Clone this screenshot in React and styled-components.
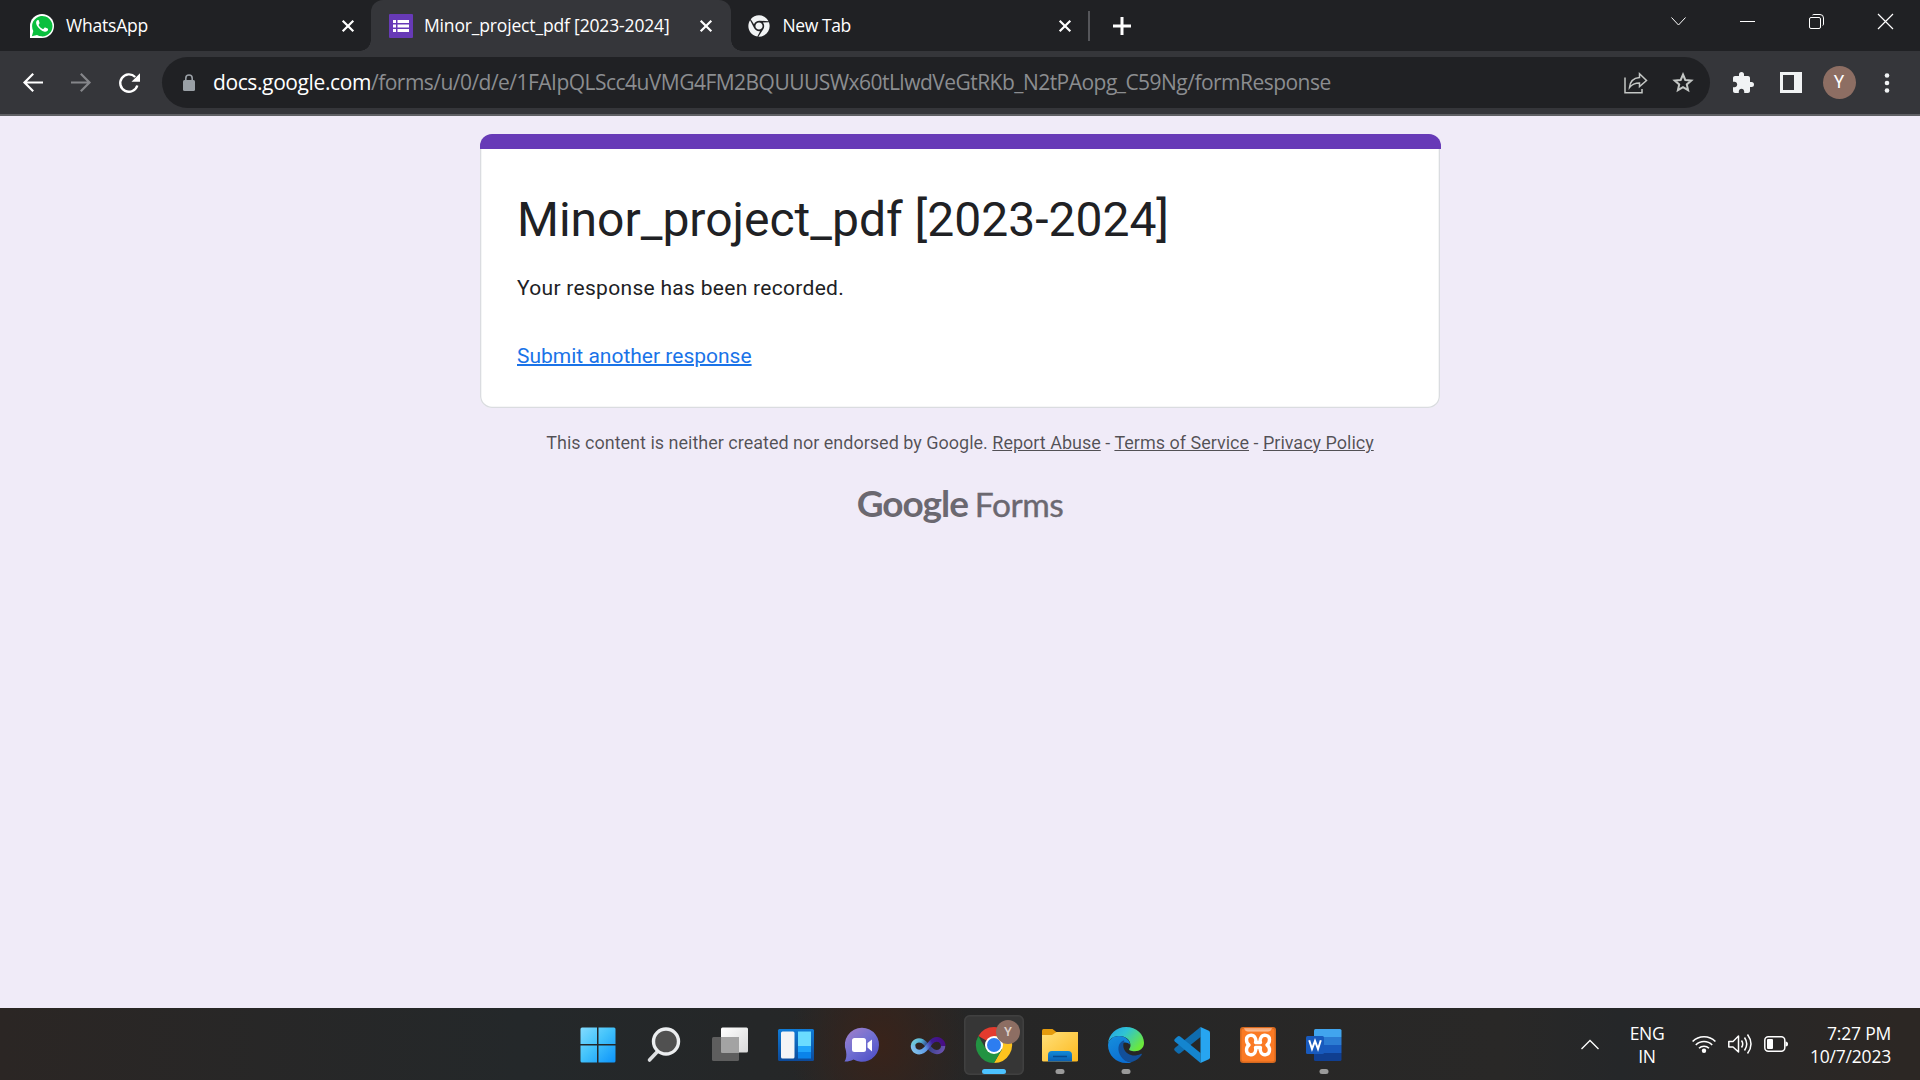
import React from "react";
import styled, { createGlobalStyle } from "styled-components";
import { FaChrome } from "react-icons/fa";

const GlobalStyle = createGlobalStyle`
  * { box-sizing: border-box; }
  body { margin: 0; background: #f0ebf8; overflow: hidden; }
`;

const ui = `"Open Sans", "Noto Sans", sans-serif`;

const Screen = styled.div`
  width: 1920px;
  height: 1080px;
  display: flex;
  flex-direction: column;
  font-family: ${ui};
`;

const Icon = styled.svg`
  display: block;
  flex: none;
  overflow: visible;
`;

/* ---------- Tab strip ---------- */

const TabStrip = styled.div`
  height: 51px;
  flex: none;
  display: flex;
  background: #202124;
`;

const Tab = styled.div`
  position: relative;
  width: ${(p) => p.$width}px;
  height: 51px;
  padding: 0 ${(p) => p.$right}px 0 ${(p) => p.$left}px;
  display: flex;
  align-items: center;
  color: #fff;
  background: ${(p) => (p.$active ? "#35363a" : "transparent")};
  border-radius: 12px 12px 0 0;
`;

const Flare = styled.span`
  position: absolute;
  bottom: 0;
  ${(p) => (p.$side === "left" ? "left: -11px;" : "right: -11px;")}
  width: 11px;
  height: 11px;
  background: radial-gradient(
    circle at ${(p) => (p.$side === "left" ? "0 0" : "100% 0")},
    transparent 10.5px,
    #35363a 11px
  );
`;

const TabTitle = styled.span`
  flex: 1;
  margin-left: ${(p) => p.$gap}px;
  padding-bottom: 1px;
  font-size: 17.5px;
  line-height: 24px;
  letter-spacing: ${(p) => p.$spacing}px;
  white-space: nowrap;
`;

const StripDivider = styled.div`
  width: 2px;
  height: 30px;
  margin-top: 11px;
  background: #55565a;
`;

const NewTab = styled.div`
  width: 64px;
  display: flex;
  align-items: center;
  justify-content: center;
`;

const WindowControls = styled.div`
  margin-left: auto;
  height: 43px;
  display: flex;
`;

const WindowButton = styled.div`
  width: 69px;
  display: flex;
  align-items: center;
  justify-content: center;
`;

/* ---------- Toolbar ---------- */

const Toolbar = styled.div`
  height: 65px;
  flex: none;
  display: flex;
  align-items: center;
  background: #35363a;
  border-bottom: 2px solid #5f6064;
`;

const NavGroup = styled.div`
  width: 162px;
  padding-left: 9px;
  display: flex;
`;

const NavButton = styled.div`
  width: 48px;
  display: flex;
  align-items: center;
  justify-content: center;
`;

const AddressBar = styled.div`
  width: 1548px;
  height: 51px;
  padding: 0 16px 0 21px;
  border-radius: 26px;
  display: flex;
  align-items: center;
  background: #202124;
`;

const Url = styled.div`
  flex: 1;
  margin-left: 18px;
  padding-bottom: 1px;
  font-size: 21px;
  line-height: 30px;
  white-space: nowrap;
  color: #8b8d90;
`;

const Host = styled.span`
  color: #fff;
  letter-spacing: -0.39px;
`;

const Path = styled.span`
  letter-spacing: -0.53px;
`;

const BarActions = styled.div`
  display: flex;
  gap: 24px;
  align-items: center;
`;

const ToolbarActions = styled.div`
  flex: 1;
  padding-left: 9px;
  display: flex;
  align-items: center;
`;

const Avatar = styled.div`
  width: 33px;
  height: 33px;
  border-radius: 50%;
  display: flex;
  align-items: center;
  justify-content: center;
  background: #8d6e63;
  color: #fff;
  font: 17.5px/1 Roboto, sans-serif;
`;

/* ---------- Form page ---------- */

const Page = styled.main`
  flex: 1;
  padding-top: 18px;
  display: flex;
  flex-direction: column;
  align-items: center;
  background: #f0ebf8;
  font-family: Roboto, sans-serif;
`;

const Card = styled.section`
  width: 960px;
  height: 274px;
  display: flex;
  flex-direction: column;
  border-radius: 12px;
  background: #fff;
  box-shadow: inset 0 0 0 1.3px #dadce0;
`;

const CardBand = styled.div`
  width: 961px;
  height: 15px;
  flex: none;
  border-radius: 12px 12px 0 0;
  background: #673ab7;
`;

const CardBody = styled.div`
  padding: 38px 37px 0;
  display: flex;
  flex-direction: column;
  align-items: flex-start;
`;

const Title = styled.h1`
  margin: 0;
  font-size: 48px;
  font-weight: 400;
  line-height: 65px;
  color: #202124;
  white-space: nowrap;
`;

const Message = styled.p`
  margin: 21px 0 0;
  font-size: 21px;
  line-height: 30px;
  letter-spacing: 0.3px;
  color: #202124;
`;

const SubmitLink = styled.a`
  margin-top: 38px;
  font-size: 21px;
  line-height: 30px;
  color: #1a73e8;
  text-decoration: underline;
  text-decoration-thickness: 2px;
`;

const Disclaimer = styled.p`
  margin: 21px 0 0;
  font-size: 18px;
  line-height: 27px;
  color: rgba(0, 0, 0, 0.66);
  white-space: nowrap;
`;

const FooterLink = styled.a`
  color: inherit;
  text-decoration: underline;
`;

const Brand = styled.div`
  margin-top: 25px;
  display: flex;
  align-items: baseline;
  gap: 7px;
  font-family: Lato, sans-serif;
  line-height: 44px;
  color: #6b6870;
`;

const BrandName = styled.span`
  font-size: 37px;
  font-weight: 700;
  letter-spacing: -1.05px;
`;

const BrandProduct = styled.span`
  font-size: 33.5px;
  letter-spacing: -0.45px;
  -webkit-text-stroke: 0.4px #6b6870;
`;

/* ---------- Taskbar ---------- */

const Taskbar = styled.footer`
  height: 72px;
  flex: none;
  padding: 1px 0 0 565px;
  display: flex;
  align-items: center;
  background: radial-gradient(ellipse 90px 110px at 880px 36px, #39231a, rgba(57, 35, 26, 0) 100%),
    linear-gradient(90deg, #2b2624 0, #24282a 520px, #262626 1000px, #292827 1500px, #252729 1620px, #2c2724 1900px);
`;

const AppButton = styled.div`
  position: relative;
  width: 60px;
  height: 60px;
  margin: 0 3px;
  display: flex;
  align-items: center;
  justify-content: center;
  border-radius: 6px;
  background: ${(p) => (p.$active ? "#363636" : "transparent")};
  box-shadow: ${(p) => (p.$active ? "inset 0 0 0 1.5px #404040" : "none")};
`;

const Indicator = styled.span`
  position: absolute;
  left: 50%;
  bottom: 1px;
  width: ${(p) => (p.$active ? 24 : 9)}px;
  height: 5px;
  transform: translateX(-50%);
  border-radius: 3px;
  background: ${(p) => (p.$active ? "#4cc2ff" : "#9a9a9a")};
`;

const ProfileBadge = styled.span`
  position: absolute;
  top: 5px;
  left: 32px;
  width: 24px;
  height: 24px;
  border-radius: 50%;
  display: flex;
  align-items: center;
  justify-content: center;
  background: #8d6e63;
  color: #ddd0cb;
  font: 500 13px/1 Roboto, sans-serif;
`;

const Tray = styled.div`
  margin-left: auto;
  padding-right: 29px;
  display: flex;
  align-items: center;
  color: #fff;
  font-size: 17.5px;
  line-height: 23px;
`;

const Language = styled.div`
  width: 36px;
  margin: 0 27px 0 30px;
  display: flex;
  flex-direction: column;
  align-items: center;
  letter-spacing: -0.4px;
`;

const StatusIcons = styled.div`
  padding-bottom: 1px;
  display: flex;
  gap: 12px;
`;

const Clock = styled.div`
  width: 103px;
  text-align: right;
  letter-spacing: -0.2px;
  white-space: nowrap;
`;

/* ---------- Drawings ---------- */

const CloseX = () => (
  <Icon width="12" height="12" viewBox="0 0 12 12" stroke="#fff" strokeWidth="2.2">
    <path d="M.7.7 11.3 11.3M11.3.7.7 11.3" />
  </Icon>
);

const WhatsAppIcon = () => (
  <Icon width="24" height="24" viewBox="0 0 24 24">
    <path d="M0 24V12A12 12 0 1 1 12 24H0Z" fill="#fff" />
    <path d="M1.9 22.2 3.3 17A10.2 10.2 0 1 1 7 20.9Z" fill="#0abf3e" />
    <path
      d="M8.8 6.5c-.3-.6-.8-.6-1.2-.4-2 1.2-1.8 3.6-.6 5.6 1.8 3 4.5 5.3 7.7 6 1.7.3 3.3-.8 3.4-2.2 0-.5-.2-.7-.6-.9l-2.2-1c-.4-.2-.7-.1-1 .3l-.7.9c-.2.3-.5.3-.9.1-1.7-.7-3.1-2-4-3.7-.2-.3-.1-.6.1-.8l.6-.8c.2-.3.2-.5.1-.8Z"
      fill="#fff"
    />
  </Icon>
);

const FormsIcon = () => (
  <Icon width="24" height="24" viewBox="0 0 24 24">
    <rect width="24" height="24" rx="1" fill="#673ab7" />
    <path d="M4 6h3v3H4zM8.5 6H20v3H8.5zM4 10.5h3v3H4zM8.5 10.5H20v3H8.5zM4 15h3v3H4zM8.5 15H20v3H8.5z" fill="#fff" />
  </Icon>
);

const ArrowIcon = ({ color = "#fff", flip }) => (
  <Icon width="20" height="19" viewBox="0 0 20 19" fill="none" stroke={color} strokeWidth="2.2">
    <path d={flip ? "M0 9.5H18M9.8.8 18.5 9.5 9.8 18.2" : "M20 9.5H2M10.2.8 1.5 9.5 10.2 18.2"} />
  </Icon>
);

const ReloadIcon = () => (
  <Icon width="21" height="20" viewBox="0 0 21 20">
    <path d="M18.3 12.5A8.7 8.7 0 1 1 16.2 4" fill="none" stroke="#fff" strokeWidth="2.4" />
    <path d="M21 .3V8.8H12.5Z" fill="#fff" />
  </Icon>
);

const LockIcon = () => (
  <Icon width="12" height="17" viewBox="0 0 12 17">
    <rect y="6" width="12" height="11" rx="1.5" fill="#9aa0a6" />
    <path d="M2.8 7V4.2a3.2 3.2 0 0 1 6.4 0V7" fill="none" stroke="#9aa0a6" strokeWidth="1.6" />
  </Icon>
);

const ShareIcon = () => (
  <Icon width="24" height="22" viewBox="0 0 24 22" fill="none" stroke="#c4c7c5" strokeWidth="1.5">
    <path d="M1 5.5V20.7H18V17" />
    <path d="M5.500 15.500C6 9.500 9.500 6 15.500 5.500V1.800L22.500 8.500 15.500 14.500V11C11 11 8 12.300 5.500 15.500Z" />
  </Icon>
);

const StarIcon = () => (
  <Icon width="22" height="21" viewBox="0 0 22 21" fill="none" stroke="#c4c7c5" strokeWidth="2">
    <path d="M11 2.5 13.3 8 19.3 8.5 14.8 12.4 16.1 18.2 11 15.1 5.9 18.2 7.2 12.4 2.7 8.5 8.7 8Z" />
  </Icon>
);

const PuzzleIcon = () => (
  <Icon width="24" height="24" viewBox="0 0 24 24" fill="#f1f3f4">
    <path d="M20.5 11H19V7c0-1.100-.9-2-2-2h-4V3.500a2.500 2.500 0 0 0-5 0V5H4c-1.100 0-1.990.9-1.990 2v3.800H3.500c1.490 0 2.700 1.210 2.700 2.700s-1.210 2.700-2.700 2.700H2V20c0 1.100.9 2 2 2h3.800v-1.500c0-1.490 1.210-2.700 2.700-2.700 1.490 0 2.700 1.210 2.700 2.700V22H17c1.100 0 2-.9 2-2v-4h1.500a2.500 2.500 0 0 0 0-5z" />
  </Icon>
);

const SidePanelIcon = () => (
  <Icon width="22" height="21" viewBox="0 0 22 21">
    <path d="M0 0H22V21H0ZM3 3V18H14V3Z" fill="#f1f3f4" fillRule="evenodd" />
  </Icon>
);

const DotsIcon = () => (
  <Icon width="5" height="20" viewBox="0 0 5 20" fill="#f1f3f4">
    <circle cx="2" cy="2.5" r="2.3" />
    <circle cx="2" cy="10" r="2.3" />
    <circle cx="2" cy="17.5" r="2.3" />
  </Icon>
);

const StartIcon = () => (
  <Icon width="36" height="36" viewBox="0 0 36 36">
    <linearGradient id="start" x1="0" y1="0" x2="36" y2="36" gradientUnits="userSpaceOnUse">
      <stop stopColor="#85dcff" />
      <stop offset=".45" stopColor="#45c4fb" />
      <stop offset="1" stopColor="#0a92fa" />
    </linearGradient>
    <path
      d="M2 .5H17V17H.5V2Q.5.5 2 .5ZM18.500.5H34Q35.500.5 35.500 2V17H18.500ZM.5 18.500H17V35.500H2Q.5 35.500.5 34ZM18.500 18.500H35.500V34Q35.500 35.500 34 35.500H18.500Z"
      fill="url(#start)"
    />
  </Icon>
);

const SearchIcon = () => (
  <Icon width="36" height="36" viewBox="0 0 36 36">
    <path d="M3.5 33 12 24" stroke="#dcdee0" strokeWidth="3.6" strokeLinecap="round" />
    <circle cx="20" cy="14.5" r="12.5" fill="#505050" stroke="#eceef0" strokeWidth="3.4" />
  </Icon>
);

const TaskViewIcon = () => (
  <Icon width="36" height="36" viewBox="0 0 36 36">
    <linearGradient id="tv" x1="0" y1="0" x2="1" y2="1">
      <stop stopColor="#fff" />
      <stop offset="1" stopColor="#d8d8d8" />
    </linearGradient>
    <rect x="0" y="10" width="27" height="24" rx="1.5" fill="#5e5e5e" />
    <rect x="9" y=".5" width="27" height="25" rx="1.5" fill="url(#tv)" />
    <path d="M9 10H27V25.500H9Z" fill="#a3a3a3" />
  </Icon>
);

const WidgetsIcon = () => (
  <Icon width="36" height="36" viewBox="0 0 36 36">
    <linearGradient id="wd" x1="0" y1="0" x2="0" y2="1">
      <stop stopColor="#0f7bd6" />
      <stop offset="1" stopColor="#0c4a9a" />
    </linearGradient>
    <rect y="2" width="36" height="32" rx="1.5" fill="url(#wd)" />
    <rect x="3" y="4.5" width="13.5" height="27" rx="1.5" fill="#f4f4f6" />
    <path d="M20 4.5H33V19H20Z" fill="#6bdcff" />
    <path d="M20 19H33V25H20Z" fill="#20a5fb" />
    <path d="M20 25H33V31.500H20Z" fill="#0a83ea" />
  </Icon>
);

const ChatIcon = () => (
  <Icon width="36" height="36" viewBox="0 0 36 36">
    <linearGradient id="chat" x1="0" y1="0" x2=".8" y2="1">
      <stop stopColor="#a580c8" />
      <stop offset=".5" stopColor="#7472d2" />
      <stop offset="1" stopColor="#5050c8" />
    </linearGradient>
    <path d="M18 .8A17 17 0 1 1 9.500 32.500C6 34.300 3 34.800.5 34.500 2.300 32 2.800 28.500 2 24A17 17 0 0 1 18 .8Z" fill="url(#chat)" />
    <rect x="8" y="11" width="14" height="14" rx="2.5" fill="#fff" />
    <path d="M23.5 16 28 12.5V24.500L23.500 20.500Z" fill="#fff" />
  </Icon>
);

const InfinityIcon = () => (
  <Icon width="36" height="36" viewBox="0 0 36 36" fill="none" strokeWidth="4.2">
    <linearGradient id="infUnder" x1="0" y1="10" x2="34" y2="28" gradientUnits="userSpaceOnUse">
      <stop stopColor="#8ad8dc" />
      <stop offset=".3" stopColor="#56b3d6" />
      <stop offset=".5" stopColor="#2c3f86" />
      <stop offset="1" stopColor="#7353b4" />
    </linearGradient>
    <linearGradient id="infOver" x1="2" y1="26" x2="34" y2="12" gradientUnits="userSpaceOnUse">
      <stop stopColor="#86c6ea" />
      <stop offset=".4" stopColor="#5f9be8" />
      <stop offset=".65" stopColor="#3d1c93" />
      <stop offset="1" stopColor="#4a0a80" />
    </linearGradient>
    <path
      d="M3 19C3 14.500 8 12 12.300 14.200 16.500 16.400 18.500 21.500 23 24 28 26.700 33 24 33.200 18.800"
      stroke="url(#infUnder)"
    />
    <path
      d="M3 18.500C3 24.500 8.500 26.500 13 24 17.500 21.500 19.300 15.500 23.500 13.300 28 11 33.200 13.500 33.200 19"
      stroke="url(#infOver)"
      strokeWidth="4.6"
    />
  </Icon>
);

const ChromeColor = () => (
  <Icon width="36" height="36" viewBox="0 0 36 36">
    <path d="M18 18 2.4 9A18 18 0 0 1 33.600 9H18Z" fill="#e33b2e" />
    <path d="M18 9H33.600A18 18 0 0 1 18 36L25.800 22.500Z" fill="#fcc31e" />
    <path d="M2.4 9A18 18 0 0 0 18 36L25.800 22.500 18 18 10.200 22.500Z" fill="#229342" />
    <circle cx="18" cy="18" r="9" fill="#fff" />
    <circle cx="18" cy="18" r="7" fill="#2d7df0" />
  </Icon>
);

const FolderIcon = () => (
  <Icon width="36" height="36" viewBox="0 0 36 36">
    <linearGradient id="fold" x1="0" y1="0" x2="1" y2="1">
      <stop stopColor="#ffe07a" />
      <stop offset="1" stopColor="#fdb91e" />
    </linearGradient>
    <linearGradient id="foldb" x1="0" y1="0" x2="0" y2="1">
      <stop stopColor="#128bd8" />
      <stop offset="1" stopColor="#0a5eb0" />
    </linearGradient>
    <path d="M0 3.500Q0 2 1.500 2H10.500L15 5.500V10H0Z" fill="#e49b0d" />
    <path d="M0 8H10L14.500 5H36V33.500Q36 34.500 34.500 34.500H1.500Q0 34.500 0 33.500Z" fill="url(#fold)" />
    <path d="M6 34.500V28Q6 24 10 24H26Q30 24 30 28V34.500Z" fill="url(#foldb)" />
    <path d="M11 29.500H25" stroke="#074a8d" strokeWidth="1.5" />
  </Icon>
);

const EdgeIcon = () => (
  <Icon width="36" height="36" viewBox="0 0 256 256">
    <linearGradient id="e1" x1="0" y1="0" x2="1" y2=".6">
      <stop stopColor="#249ee8" />
      <stop offset=".45" stopColor="#2fc3d4" />
      <stop offset="1" stopColor="#6be83c" />
    </linearGradient>
    <linearGradient id="e2" x1="0" y1="0" x2=".5" y2="1">
      <stop stopColor="#168fdd" />
      <stop offset="1" stopColor="#0b6fd2" />
    </linearGradient>
    <path d="M0 120C5 50 60 0 128 0c75 0 128 52 128 112 0 39-29 60-65 60-30 0-45-8-40-16 6-9 9-16 9-26C160 83 112 62 74 64 34 66 8 88 0 120Z" fill="url(#e1)" />
    <path d="M0 128C4 88 38 64 78 64c45 0 78 30 78 60-12-12-31-18-47-12-29 11-35 55-16 88 17 30 44 48 76 52-14 4-27 4-41 4C58 256 0 200 0 128Z" fill="url(#e2)" />
    <path d="M109 96C68 113 65 168 91 208c22 35 56 48 84 39 28-9 50-28 64-48 5-8-1-11-8-7-27 14-62 15-88-2-36-23-42-67-26-91-3-2-6-3-8-3Z" fill="#124f99" />
  </Icon>
);

const VsCodeIcon = () => (
  <Icon width="36" height="36" viewBox="0 0 36 36" strokeLinejoin="round">
    <path d="M26.500 0V10L6.500 26Q4.800 27.300 3.300 26L.8 23.700Q-.5 22.300.8 21Z" fill="#0f6cae" />
    <path d="M26.500 36V26L6.500 9.700Q4.800 8.500 3.300 9.700L.8 12Q-.5 13.300.8 14.600Z" fill="#1485cf" />
    <path d="M26.500 0 34.800 3.800Q36 4.400 36 5.800V30.200Q36 31.600 34.800 32.200L26.500 36Z" fill="#27a5f0" />
  </Icon>
);

const XamppIcon = () => (
  <Icon width="36" height="36" viewBox="0 0 36 36">
    <linearGradient id="xshine" x1="0" y1="0" x2="0" y2="1">
      <stop stopColor="#f3a06c" />
      <stop offset="1" stopColor="#fdc49c" />
    </linearGradient>
    <rect width="36" height="36" rx="3" fill="#d4681f" />
    <rect x="1.5" y="1.5" width="33" height="33" rx="2.5" fill="#fb7a24" />
    <path d="M4 1H32Q31 4.500 28 4.500H8Q5 4.500 4 1Z" fill="url(#xshine)" />
    <path
      d="M6.500 12.500C6.500 7.500 13 7 15 10.500C16 12.300 16 14.500 15.500 15.500H20.500C20 14.500 20 12.300 21 10.500C23 7 29.500 7.500 29.500 12.500C29.500 15.500 28.500 17 27 18C28.500 19 29.500 20.500 29.500 23C29.500 28.500 23 29 21 25.500C20 23.700 20 22 20.500 20.500H15.500C16 22 16 23.700 15 25.500C13 29 6.500 28.500 6.500 23C6.500 20.500 7.500 19 9 18C7.500 17 6.500 15.500 6.500 12.500Z"
      fill="none"
      stroke="#fff"
      strokeWidth="3.4"
      strokeLinejoin="round"
    />
  </Icon>
);

const WordIcon = () => (
  <Icon width="36" height="36" viewBox="0 0 36 36">
    <path d="M8 3.500Q8 2 9.500 2H34Q35.500 2 35.500 3.500V10H8Z" fill="#41a5ee" />
    <path d="M8 10H35.500V18H8Z" fill="#2b7cd3" />
    <path d="M8 18H35.500V26H8Z" fill="#185abd" />
    <path d="M8 26H35.500V32.500Q35.500 34 34 34H9.500Q8 34 8 32.500Z" fill="#103f91" />
    <rect y="9" width="18" height="18" rx="1.5" fill="#185abd" />
    <path d="M3.2 13.200 6 22 9 13.800 12 22 14.800 13.200" fill="none" stroke="#fff" strokeWidth="2" />
  </Icon>
);

const WifiIcon = () => (
  <Icon width="24" height="24" viewBox="0 0 24 24" fill="none" stroke="#fff" strokeWidth="1.6">
    <path d="M.6 9.500A16 16 0 0 1 23.400 9.500M3.800 13A11.500 11.500 0 0 1 20.200 13M7 16.300A7 7 0 0 1 17 16.300" />
    <circle cx="12" cy="18.800" r="2.200" fill="#fff" stroke="none" />
  </Icon>
);

const VolumeIcon = () => (
  <Icon width="24" height="24" viewBox="0 0 24 24" fill="none" stroke="#fff" strokeWidth="1.5" strokeLinejoin="round">
    <path d="M.8 9.500H5L10.500 4V20L5 15H.8Z" />
    <path d="M13.500 8.500Q16 12 13.500 15.500M16.500 5.500Q21 12 16.500 18.500M19.500 2.500Q26.500 12 19.500 21.500" />
  </Icon>
);

const BatteryIcon = () => (
  <Icon width="24" height="24" viewBox="0 0 24 24">
    <rect x=".8" y="4.8" width="20" height="14.5" rx="3.5" fill="none" stroke="#fff" strokeWidth="1.5" />
    <rect x="3" y="7" width="6" height="10" rx="1" fill="#fff" />
    <path d="M21.500 9.500Q24 9.500 24 12T21.500 14.500Z" fill="#fff" />
  </Icon>
);

const apps = [
  { icon: <StartIcon /> },
  { icon: <SearchIcon /> },
  { icon: <TaskViewIcon /> },
  { icon: <WidgetsIcon /> },
  { icon: <ChatIcon /> },
  { icon: <InfinityIcon /> },
  { icon: <ChromeColor />, active: true, open: true, badge: "Y" },
  { icon: <FolderIcon />, open: true },
  { icon: <EdgeIcon />, open: true },
  { icon: <VsCodeIcon /> },
  { icon: <XamppIcon /> },
  { icon: <WordIcon />, open: true },
];

export default function App() {
  return (
    <Screen>
      <GlobalStyle />
      <TabStrip>
        <Tab $width={371} $left={30} $right={17}>
          <WhatsAppIcon />
          <TabTitle $gap={12} $spacing={-0.2}>WhatsApp</TabTitle>
          <CloseX />
        </Tab>
        <Tab $width={360} $left={18} $right={19} $active>
          <Flare $side="left" />
          <FormsIcon />
          <TabTitle $gap={11} $spacing={-0.16}>Minor_project_pdf [2023-2024]</TabTitle>
          <CloseX />
          <Flare $side="right" />
        </Tab>
        <Tab $width={357} $left={17} $right={17}>
          <FaChrome size={22} color="#f1f3f4" />
          <TabTitle $gap={12.5} $spacing={-0.4}>New Tab</TabTitle>
          <CloseX />
        </Tab>
        <StripDivider />
        <NewTab>
          <Icon width="18" height="18" viewBox="0 0 18 18" stroke="#fff" strokeWidth="3">
            <path d="M0 9H18M9 0V18" />
          </Icon>
        </NewTab>
        <WindowControls>
          <WindowButton>
            <Icon width="15" height="9" viewBox="0 0 15 9" fill="none" stroke="#fff">
              <path d="M.5.5 7.500 8 14.500.5" />
            </Icon>
          </WindowButton>
          <WindowButton>
            <Icon width="15" height="1" viewBox="0 0 15 1">
              <path d="M0 0H15V1H0Z" fill="#fff" />
            </Icon>
          </WindowButton>
          <WindowButton>
            <Icon width="15" height="15" viewBox="0 0 15 15" fill="none" stroke="#fff">
              <rect x=".5" y="3.5" width="11" height="11" rx="1.5" />
              <path d="M3.500 1Q4 .5 5 .5H11Q14.500.5 14.500 4V10Q14.500 11 13.800 11.500" />
            </Icon>
          </WindowButton>
          <WindowButton>
            <Icon width="15" height="15" viewBox="0 0 15 15" stroke="#fff" strokeWidth="1.2">
              <path d="M0 0 15 15M15 0 0 15" />
            </Icon>
          </WindowButton>
        </WindowControls>
      </TabStrip>

      <Toolbar>
        <NavGroup>
          <NavButton><ArrowIcon /></NavButton>
          <NavButton><ArrowIcon color="#85868a" flip /></NavButton>
          <NavButton><ReloadIcon /></NavButton>
        </NavGroup>
        <AddressBar>
          <LockIcon />
          <Url>
            <Host>docs.google.com</Host>
            <Path>/forms/u/0/d/e/1FAIpQLScc4uVMG4FM2BQUUUSWx60tLlwdVeGtRKb_N2tPAopg_C59Ng/formResponse</Path>
          </Url>
          <BarActions>
            <ShareIcon />
            <StarIcon />
          </BarActions>
        </AddressBar>
        <ToolbarActions>
          <NavButton><PuzzleIcon /></NavButton>
          <NavButton><SidePanelIcon /></NavButton>
          <NavButton><Avatar>Y</Avatar></NavButton>
          <NavButton><DotsIcon /></NavButton>
        </ToolbarActions>
      </Toolbar>

      <Page>
        <Card>
          <CardBand />
          <CardBody>
            <Title>Minor_project_pdf [2023-2024]</Title>
            <Message>Your response has been recorded.</Message>
            <SubmitLink>Submit another response</SubmitLink>
          </CardBody>
        </Card>
        <Disclaimer>
          This content is neither created nor endorsed by Google. <FooterLink>Report Abuse</FooterLink> -{" "}
          <FooterLink>Terms of Service</FooterLink> - <FooterLink>Privacy Policy</FooterLink>
        </Disclaimer>
        <Brand>
          <BrandName>Google</BrandName>
          <BrandProduct>Forms</BrandProduct>
        </Brand>
      </Page>

      <Taskbar>
        {apps.map((app, i) => (
          <AppButton key={i} $active={app.active}>
            {app.icon}
            {app.badge && <ProfileBadge>{app.badge}</ProfileBadge>}
            {app.open && <Indicator $active={app.active} />}
          </AppButton>
        ))}
        <Tray>
          <Icon width="18" height="10" viewBox="0 0 18 10" fill="none" stroke="#fff" strokeWidth="1.3">
            <path d="M.5 9 9 .5 17.500 9" />
          </Icon>
          <Language>
            <span>ENG</span>
            <span>IN</span>
          </Language>
          <StatusIcons>
            <WifiIcon />
            <VolumeIcon />
            <BatteryIcon />
          </StatusIcons>
          <Clock>
            <div>7:27 PM</div>
            <div>10/7/2023</div>
          </Clock>
        </Tray>
      </Taskbar>
    </Screen>
  );
}
